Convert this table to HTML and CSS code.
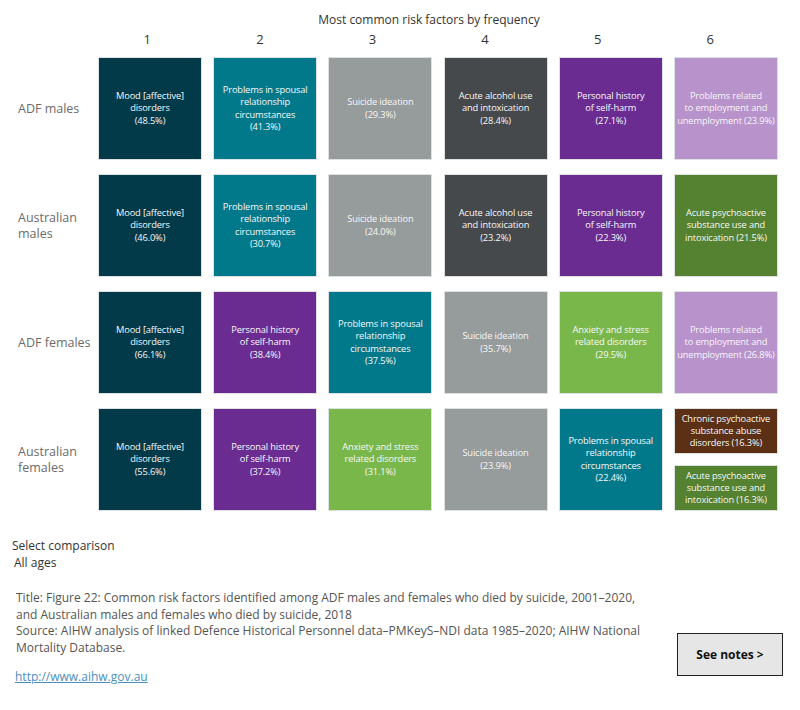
FILE: index.html
```html
<!DOCTYPE html>
<html lang="en">
<head>
<meta charset="utf-8">
<title>Most common risk factors by frequency</title>
<link rel="stylesheet" href="styles.css">
</head>
<body>
<div class="viz">
  <div class="head">
    <div class="head-title">Most common risk factors by frequency</div>
    <div class="ranks">
      <span>1</span><span>2</span><span>3</span><span>4</span><span>5</span><span>6</span>
    </div>
  </div>

  <div class="grid">
    <div class="label">ADF males</div>
    <div class="cell c-navy">Mood [affective]<br>disorders<br>(48.5%)</div>
    <div class="cell c-teal">Problems in spousal<br>relationship<br>circumstances<br>(41.3%)</div>
    <div class="cell c-grey">Suicide ideation<br>(29.3%)</div>
    <div class="cell c-char">Acute alcohol use<br>and intoxication<br>(28.4%)</div>
    <div class="cell c-purple">Personal history<br>of self-harm<br>(27.1%)</div>
    <div class="cell c-lilac">Problems related<br>to employment and<br>unemployment (23.9%)</div>

    <div class="label">Australian<br>males</div>
    <div class="cell c-navy">Mood [affective]<br>disorders<br>(46.0%)</div>
    <div class="cell c-teal">Problems in spousal<br>relationship<br>circumstances<br>(30.7%)</div>
    <div class="cell c-grey">Suicide ideation<br>(24.0%)</div>
    <div class="cell c-char">Acute alcohol use<br>and intoxication<br>(23.2%)</div>
    <div class="cell c-purple">Personal history<br>of self-harm<br>(22.3%)</div>
    <div class="cell c-moss">Acute psychoactive<br>substance use and<br>intoxication (21.5%)</div>

    <div class="label">ADF females</div>
    <div class="cell c-navy">Mood [affective]<br>disorders<br>(66.1%)</div>
    <div class="cell c-purple">Personal history<br>of self-harm<br>(38.4%)</div>
    <div class="cell c-teal">Problems in spousal<br>relationship<br>circumstances<br>(37.5%)</div>
    <div class="cell c-grey">Suicide ideation<br>(35.7%)</div>
    <div class="cell c-lime">Anxiety and stress<br>related disorders<br>(29.5%)</div>
    <div class="cell c-lilac">Problems related<br>to employment and<br>unemployment (26.8%)</div>

    <div class="label">Australian<br>females</div>
    <div class="cell c-navy">Mood [affective]<br>disorders<br>(55.6%)</div>
    <div class="cell c-purple">Personal history<br>of self-harm<br>(37.2%)</div>
    <div class="cell c-lime">Anxiety and stress<br>related disorders<br>(31.1%)</div>
    <div class="cell c-grey">Suicide ideation<br>(23.9%)</div>
    <div class="cell c-teal">Problems in spousal<br>relationship<br>circumstances<br>(22.4%)</div>
    <div class="split">
      <div class="cell c-brown">Chronic psychoactive<br>substance abuse<br>disorders (16.3%)</div>
      <div class="cell c-moss">Acute psychoactive<br>substance use and<br>intoxication (16.3%)</div>
    </div>
  </div>

  <div class="control">
    <div class="control-label">Select comparison</div>
    <div class="control-value">All ages</div>
  </div>

  <div class="footer">
    <div class="notes">
      <p class="caption">Title: Figure 22: Common risk factors identified among ADF males and females who died by suicide, 2001–2020,<br>and Australian males and females who died by suicide, 2018<br>Source: AIHW analysis of linked Defence Historical Personnel data–PMKeyS–NDI data 1985–2020; AIHW National<br>Mortality Database.</p>
      <a class="link" href="#">http://www.aihw.gov.au</a>
    </div>
    <div class="btn">See notes &gt;</div>
  </div>
</div>
</body>
</html>
```
FILE: styles.css
```css
* { box-sizing: border-box; }
html, body { margin: 0; padding: 0; background: #fff; }
body {
  font-family: "Open Sans", "Noto Sans", sans-serif;
  color: #333;
  width: 800px;
  height: 710px;
  overflow: hidden;
}
.viz { padding-top: 11px; }

.head { margin-left: 91px; width: 676px; }
.head-title {
  text-align: center;
  font-size: 12px;
  line-height: 18px;
  color: #333;
}
.ranks { display: flex; margin-top: 1px; }
.ranks span {
  width: 112.6px;
  text-align: center;
  font-size: 13px;
  line-height: 18px;
  color: #333;
}

.grid {
  margin-top: 9px;
  display: grid;
  grid-template-columns: 86.8px repeat(6, 104px);
  column-gap: 11.2px;
  grid-auto-rows: 103px;
  row-gap: 14px;
}
.label {
  padding-left: 18px;
  display: flex;
  align-items: center;
  font-size: 12.5px;
  line-height: 16px;
  color: #6b6b6b;
  white-space: nowrap;
}
.cell {
  display: flex;
  align-items: center;
  justify-content: center;
  text-align: center;
  font-size: 9.3px;
  line-height: 12.3px;
  color: #f7f7f7;
  border: 1px solid #dde1e2;
  letter-spacing: -0.15px;
}
.split {
  display: flex;
  flex-direction: column;
  gap: 11px;
}
.split .cell { flex: 1; line-height: 12px; }

.c-navy { background: #023a4a; }
.c-teal { background: #01798b; }
.c-grey { background: #969b9c; }
.c-char { background: #46494c; }
.c-purple { background: #6a2c91; }
.c-lilac { background: #b792cb; }
.c-moss { background: #548230; }
.c-lime { background: #7ab74b; }
.c-brown { background: #5b3015; }

.control { margin-top: 27px; }
.control-label {
  padding-left: 12px;
  font-size: 12px;
  line-height: 16px;
  color: #333;
}
.control-value {
  padding-left: 14px;
  font-size: 12px;
  line-height: 17px;
  color: #333;
}

.footer {
  margin-top: 19px;
  display: flex;
  align-items: flex-start;
}
.notes { width: 660px; padding-left: 16px; }
.caption {
  margin: 0;
  font-size: 12px;
  line-height: 16.7px;
  color: #555;
  white-space: nowrap;
}
.link {
  display: inline-block;
  margin-top: 12px;
  margin-left: -1px;
  font-size: 12px;
  line-height: 16px;
  color: #4a8fc0;
  text-decoration: underline;
}
.btn {
  margin-top: 43px;
  margin-left: 17px;
  width: 106px;
  height: 43px;
  display: flex;
  align-items: center;
  justify-content: center;
  background: #e6e6e6;
  border: 1px solid #222;
  font-size: 12px;
  font-weight: 700;
  color: #111;
}
```
